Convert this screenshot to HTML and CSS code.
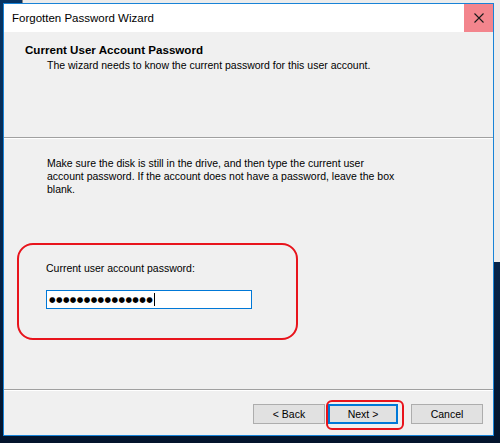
FILE: index.html
```html
<!DOCTYPE html>
<html>
<head>
<meta charset="utf-8">
<link rel="stylesheet" href="styles.css">
</head>
<body>
<div class="desktop">
  <div class="behind"></div>
  <div class="window">
    <div class="titlebar">
      <span class="title">Forgotten Password Wizard</span>
      <div class="close">
        <svg width="10" height="10" viewBox="0 0 10 10"><path d="M0.5 0.5L9.5 9.5M9.5 0.5L0.5 9.5" stroke="#1a1a1a" stroke-width="1.1" fill="none"/></svg>
      </div>
    </div>
    <div class="client">
      <div class="header">
        <div class="h-title">Current User Account Password</div>
        <div class="h-sub">The wizard needs to know the current password for this user account.</div>
      </div>
      <div class="body">
        <p class="info">Make sure the disk is still in the drive, and then type the current user<br>account password. If the account does not have a password, leave the box<br>blank.</p>
        <div class="highlight">
          <div class="label">Current user account password:</div>
          <div class="input"><span class="dots">●●●●●●●●●●●●●●●</span><span class="caret"></span></div>
        </div>
      </div>
      <div class="footer">
        <button class="btn back">&lt; Back</button>
        <div class="ring"><button class="btn default">Next &gt;</button></div>
        <button class="btn cancel">Cancel</button>
      </div>
    </div>
  </div>
</div>
</body>
</html>
```

FILE: styles.css
```css
html, body {
  margin: 0;
  padding: 0;
}
body {
  width: 500px;
  height: 443px;
  overflow: hidden;
  font-family: "Liberation Sans", Arial, sans-serif;
  font-size: 10.5px;
  color: #000;
}
.desktop {
  position: relative;
  width: 500px;
  height: 443px;
  background: linear-gradient(#073463 0%, #05244a 60%, #03142c 100%);
  padding: 3px 0 0 3px;
  box-sizing: border-box;
}
.behind {
  position: absolute;
  left: 22px;
  top: 0;
  width: 478px;
  height: 262px;
  background: #ececec;
  border-left: 1px solid #8a8a8a;
  box-sizing: border-box;
}
.window {
  position: relative;
  width: 491px;
  height: 433px;
  border: 1px solid #1883d7;
  box-sizing: border-box;
  background: #f0f0f0;
  display: flex;
  flex-direction: column;
}
.titlebar {
  height: 28px;
  background: #fff;
  display: flex;
  align-items: center;
  justify-content: space-between;
  flex: none;
}
.title {
  font-size: 11.5px;
  padding-left: 8px;
  color: #000;
}
.close {
  width: 29px;
  height: 28px;
  background: #f3858d;
  display: flex;
  align-items: center;
  justify-content: center;
}
.client {
  flex: 1;
  display: flex;
  flex-direction: column;
}
.header {
  height: 106px;
  border-bottom: 1px solid #a0a0a0;
  box-shadow: 0 1px 0 #fff;
  padding: 11px 0 0 21px;
  box-sizing: border-box;
  flex: none;
}
.h-title {
  font-weight: bold;
  font-size: 11.6px;
  line-height: 14px;
}
.h-sub {
  padding-left: 22px;
  line-height: 14px;
  margin-top: 1px;
}
.body {
  height: 252px;
  border-bottom: 1px solid #a0a0a0;
  box-shadow: 0 1px 0 #fff;
  box-sizing: border-box;
  padding: 19px 0 0 0;
  flex: none;
}
.info {
  margin: 0 0 0 43px;
  line-height: 13px;
}
.highlight {
  margin: 47px 0 0 13px;
  width: 281px;
  height: 97px;
  border: 2px solid #e8141c;
  border-radius: 16px;
  box-sizing: border-box;
  padding: 17px 0 0 27px;
}
.label {
  line-height: 13px;
}
.input {
  margin-top: 15px;
  width: 206px;
  height: 19px;
  background: #fff;
  border: 1px solid #0078d7;
  box-sizing: border-box;
  display: flex;
  align-items: center;
  padding-left: 2px;
}
.dots {
  font-family: "DejaVu Sans", sans-serif;
  font-size: 7.5px;
  letter-spacing: 0.4px;
  line-height: 10px;
}
.caret {
  width: 1px;
  height: 13px;
  background: #000;
  margin-left: 1px;
}
.footer {
  flex: 1;
  display: flex;
  align-items: flex-start;
  justify-content: flex-end;
  padding: 0 10px 0 0;
}
.btn {
  width: 72px;
  height: 20px;
  background: #e1e1e1;
  border: 1px solid #adadad;
  font-family: "Liberation Sans", Arial, sans-serif;
  font-size: 10.5px;
  color: #000;
  padding: 0;
  margin: 0;
}
.back {
  margin-top: 14px;
}
.ring {
  margin: 10px 0 0 1px;
  border: 2px solid #e8141c;
  border-radius: 6px;
  padding: 2px 4px 4px 0;
  display: flex;
}
.default {
  width: 70px;
  border: 2px solid #0078d7;
}
.cancel {
  margin: 14px 0 0 7px;
}
```
